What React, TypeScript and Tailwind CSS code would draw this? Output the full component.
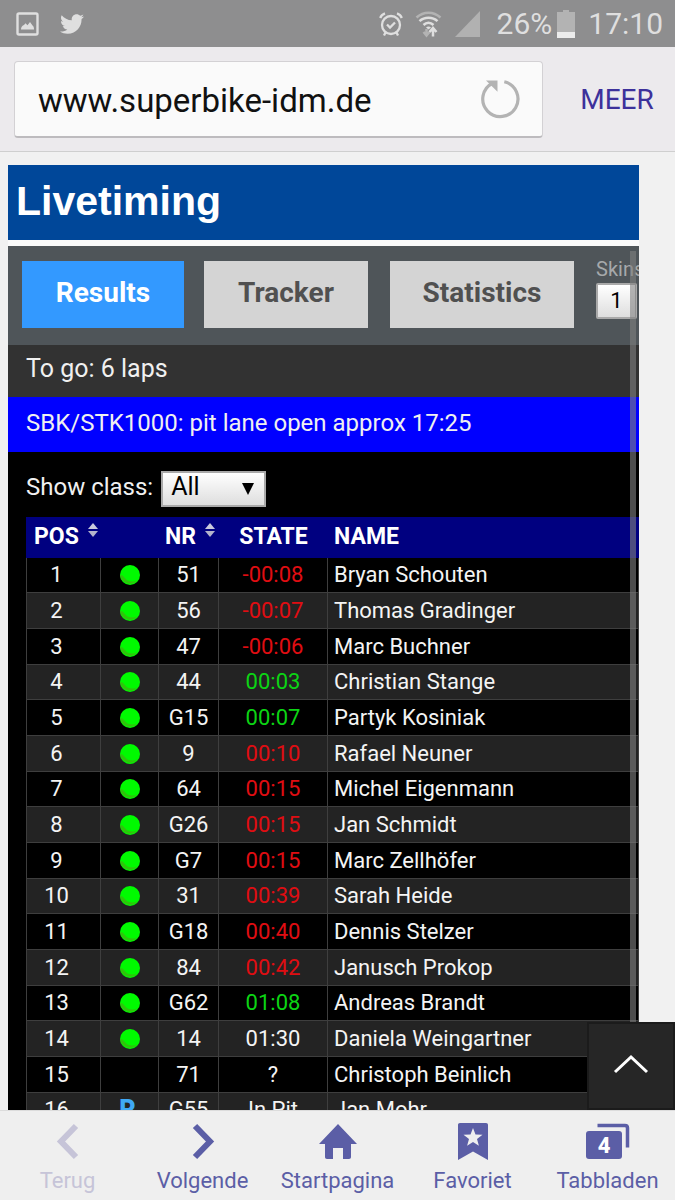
import React from 'react';
import { FaTwitter } from 'react-icons/fa';

interface Rider {
  pos: number;
  status: 'track' | 'pit' | 'none';
  nr: string;
  state: string;
  color: string;
  name: string;
}

const RED = 'text-[#e00d12]';
const GREEN = 'text-[#0cd414]';
const WHITE = 'text-[#f4f4f4]';

const riders: Rider[] = [
  { pos: 1, status: 'track', nr: '51', state: '-00:08', color: RED, name: 'Bryan Schouten' },
  { pos: 2, status: 'track', nr: '56', state: '-00:07', color: RED, name: 'Thomas Gradinger' },
  { pos: 3, status: 'track', nr: '47', state: '-00:06', color: RED, name: 'Marc Buchner' },
  { pos: 4, status: 'track', nr: '44', state: '00:03', color: GREEN, name: 'Christian Stange' },
  { pos: 5, status: 'track', nr: 'G15', state: '00:07', color: GREEN, name: 'Partyk Kosiniak' },
  { pos: 6, status: 'track', nr: '9', state: '00:10', color: RED, name: 'Rafael Neuner' },
  { pos: 7, status: 'track', nr: '64', state: '00:15', color: RED, name: 'Michel Eigenmann' },
  { pos: 8, status: 'track', nr: 'G26', state: '00:15', color: RED, name: 'Jan Schmidt' },
  { pos: 9, status: 'track', nr: 'G7', state: '00:15', color: RED, name: 'Marc Zellhöfer' },
  { pos: 10, status: 'track', nr: '31', state: '00:39', color: RED, name: 'Sarah Heide' },
  { pos: 11, status: 'track', nr: 'G18', state: '00:40', color: RED, name: 'Dennis Stelzer' },
  { pos: 12, status: 'track', nr: '84', state: '00:42', color: RED, name: 'Janusch Prokop' },
  { pos: 13, status: 'track', nr: 'G62', state: '01:08', color: GREEN, name: 'Andreas Brandt' },
  { pos: 14, status: 'track', nr: '14', state: '01:30', color: WHITE, name: 'Daniela Weingartner' },
  { pos: 15, status: 'none', nr: '71', state: '?', color: WHITE, name: 'Christoph Beinlich' },
  { pos: 16, status: 'pit', nr: 'G55', state: 'In Pit', color: WHITE, name: 'Jan Mohr' },
];

const StatusBar: React.FC = () => (
  <div className="flex h-[47px] shrink-0 items-center bg-[#8e8e8f] pr-3 pl-4 text-[#dfdfdf]">
    {/* Picture notification */}
    <svg className="h-6 w-6" viewBox="0 0 24 24" fill="none">
      <rect x="1.5" y="1.5" width="20" height="21" rx="1.5" stroke="currentColor" strokeWidth="2.4" />
      <path d="M5 17.5c0-2.500 1.500-4 3-4.500l1.500-1.800 2 2 2.500-3.200 2.500 3.500c1 .5 1.500 2 1.500 4z" fill="currentColor" />
    </svg>
    <FaTwitter className="ml-5 h-6 w-6" />

    <div className="ml-auto flex items-center">
      {/* Alarm */}
      <svg className="h-6 w-6" viewBox="0 0 24 24" fill="none" stroke="currentColor" strokeWidth="2.300">
        <circle cx="12" cy="13" r="9" />
        <path d="M8 12.500l3 3 5-5" />
        <path d="M1.200 6c.8-2.200 2.400-3.800 4.800-4.700M22.800 6c-.8-2.200-2.400-3.800-4.800-4.700M6.500 20.500L5 23.500M17.500 20.500l1.500 3" />
      </svg>
      {/* Wifi */}
      <svg className="ml-3 h-7 w-7" viewBox="0 0 28 28" fill="none" stroke="currentColor" strokeWidth="2.500">
        <path d="M1.500 7.500c7-6.500 17-6.500 24 0" opacity="0.45" />
        <path d="M4.500 11.200c5-4.600 13-4.600 18 0M8.500 15c3-2.900 7-2.900 10 0" />
        <path d="M11 17.500c1.500-1.500 3.500-1.500 5 0l-2.500 2z" fill="currentColor" stroke="none" />
        <path d="M11.500 19v6M8.500 22l3 3.500 3-3.500" opacity="0.45" />
        <path d="M18 26.500v-7M14.500 22l3.500-4 3.500 4" />
      </svg>
      {/* Signal */}
      <svg className="ml-3 h-[26px] w-[26px]" viewBox="0 0 26 26">
        <path d="M25 0v26H0z" fill="#b1b1b1" />
      </svg>
      <span className="ml-4 text-[30px] leading-9">26%</span>
      {/* Battery */}
      <svg className="ml-1 h-7 w-5" viewBox="0 0 20 28">
        <path d="M7 0h6v2h6v26H1V2h6z" fill="#b3b3b3" />
        <path d="M1 22h18v6H1z" fill="#ececec" />
      </svg>
      <span className="ml-3 text-[30px] leading-9">17:10</span>
    </div>
  </div>
);

const AddressBar: React.FC = () => (
  <div className="flex h-[105px] shrink-0 items-center border-b border-[#cfcfcf] bg-[#eceaed] pl-[14px]">
    <div className="flex h-[77px] min-w-0 flex-1 items-center rounded border border-b-2 border-[#d3d1d4] border-b-[#bdbbbe] bg-[#fafafa] pr-5 pl-[23px]">
      <input
        type="text"
        aria-label="URL"
        defaultValue="www.superbike-idm.de"
        className="min-w-0 flex-1 bg-transparent pt-1 text-[33px] leading-10 text-[#111] outline-none"
      />
      <button type="button" aria-label="Reload" className="shrink-0">
        <svg className="h-11 w-11" viewBox="0 0 44 44" fill="none">
          <path d="M26.300 4.800A17.600 17.600 0 1 1 14.500 6.200" stroke="#b3b3b3" strokeWidth="3.200" />
          <path d="M8 3.500h11.500v11.300z" fill="#b3b3b3" />
        </svg>
      </button>
    </div>
    <button type="button" className="w-[132px] shrink-0 pt-0.5 pl-4 text-center text-[28px] leading-9 text-[#3d319b]">
      MEER
    </button>
  </div>
);

const SortIcon: React.FC = () => (
  <svg className="h-[14px] w-[10px]" viewBox="0 0 10 14">
    <path d="M5 0l5 6H0z" fill="#c9c9dd" />
    <path d="M5 14l5-6H0z" fill="#b4b4cc" />
  </svg>
);

const TrackDot: React.FC = () => (
  <svg className="mx-auto h-5 w-5" viewBox="0 0 20 20" role="img" aria-label="On track">
    <circle cx="10" cy="10" r="10" fill="#00fa00" />
    <path d="M0 10c4-.5 5 5 9 6 3 .8 6 .5 8.500-.8A10 10 0 0 1 0 10z" fill="#2fc40c" />
  </svg>
);

const Results: React.FC = () => (
  <table className="w-full table-fixed border-separate border-spacing-0 text-[22px] leading-6 text-[#f4f4f4]">
    <colgroup>
      <col className="w-[75px]" />
      <col className="w-[58px]" />
      <col className="w-[60px]" />
      <col className="w-[109px]" />
      <col />
    </colgroup>
    <thead>
      <tr className="h-[41px] bg-[#000080] text-left text-[23px] leading-7 font-bold text-white [&>th]:p-0 [&>th]:pb-0.5">
        <th>
          <button type="button" className="ml-2 flex gap-[9px]">
            POS <SortIcon />
          </button>
        </th>
        <th aria-label="Status" />
        <th>
          <button type="button" className="ml-[6px] flex gap-[9px]">
            NR <SortIcon />
          </button>
        </th>
        <th className="text-center">STATE</th>
        <th>
          <span className="ml-[6px]">NAME</span>
        </th>
      </tr>
    </thead>
    <tbody>
      {riders.map((r) => (
        <tr
          key={r.pos}
          className="h-9 odd:bg-black even:bg-[#232323] nth-[3n+1]:h-[35px] [&>td]:border-r [&>td]:border-b [&>td]:border-[#3e3e3e] [&>td]:p-0"
        >
          <td className="border-l text-center">
            <span className="mr-[14px]">{r.pos}</span>
          </td>
          <td className="text-center">
            {r.status === 'track' && <TrackDot />}
            {r.status === 'pit' && <span className="mr-1 text-[25px] leading-6 font-black text-[#3fa9f5]">P</span>}
          </td>
          <td className="text-center">{r.nr}</td>
          <td className={`text-center ${r.color}`}>{r.state}</td>
          <td className="whitespace-nowrap">
            <span className="ml-[6px]">{r.name}</span>
          </td>
        </tr>
      ))}
    </tbody>
  </table>
);

const BottomNav: React.FC = () => (
  <nav className="grid h-[90px] shrink-0 grid-cols-5 border-t border-[#dcdcdc] bg-[#efefef] text-[22px] leading-7 text-[#5b5ea6]">
    <button type="button" disabled className="flex flex-col items-center gap-1 pt-3 text-[#c6c4d8]">
      <svg className="h-10 w-10" viewBox="0 0 40 40" fill="none" stroke="currentColor" strokeWidth="6">
        <path d="M28 3L13 18.500 28 34" />
      </svg>
      Terug
    </button>
    <button type="button" className="flex flex-col items-center gap-1 pt-3">
      <svg className="h-10 w-10" viewBox="0 0 40 40" fill="none" stroke="currentColor" strokeWidth="6">
        <path d="M12 3l15 15.500L12 34" />
      </svg>
      Volgende
    </button>
    <button type="button" className="flex flex-col items-center gap-1 pt-3">
      <svg className="h-10 w-10" viewBox="0 0 40 40" fill="currentColor">
        <path d="M20 1L1 21h6v13c0 1 .7 2 2 2h6V25h10v11h6c1.300 0 2-1 2-2V21h6z" />
      </svg>
      Startpagina
    </button>
    <button type="button" className="flex flex-col items-center gap-1 pt-3">
      <svg className="h-10 w-10" viewBox="0 0 40 40">
        <path d="M7 0h26c1.300 0 2 .7 2 2v35l-15-8.500L5 37V2c0-1.300.7-2 2-2z" fill="currentColor" />
        <path d="M20 5l2.500 6.500 7 .3-5.500 4.300 1.900 6.700-5.900-3.800-5.900 3.800 1.900-6.700-5.500-4.300 7-.3z" fill="#efefef" />
      </svg>
      Favoriet
    </button>
    <button type="button" className="flex flex-col items-center gap-1 pt-3">
      <svg className="h-10 w-11" viewBox="0 0 44 40">
        <path d="M11.500 2.500H39c1.500 0 2.500 1 2.500 2.500v19.500" fill="none" stroke="currentColor" strokeWidth="3.500" />
        <rect x="0" y="8" width="36" height="28" rx="3" fill="currentColor" />
        <text x="18" y="30" textAnchor="middle" fontSize="22" fontWeight="800" fill="#fff">4</text>
      </svg>
      Tabbladen
    </button>
  </nav>
);

const App: React.FC = () => {
  return (
    <div className="flex h-screen flex-col overflow-hidden bg-[#f1f1f1] font-['Roboto',sans-serif]">
      <StatusBar />
      <AddressBar />

      <main className="relative min-h-0 flex-1 overflow-hidden pt-[13px] pr-9 pl-2">
        <h1 className="h-[75px] bg-[#004799] pl-2 font-['Liberation_Sans',sans-serif] text-[41px] leading-[73px] font-bold text-white">
          Livetiming
        </h1>
        <div className="h-[6px] bg-[#fafafa]" />

        <div className="relative overflow-hidden bg-black">
          {/* Tabs and skin picker */}
          <div className="flex h-[99px] items-start bg-[#4f5559] pt-[15px] pl-[14px] text-[28px] font-bold text-[#505050]">
            <button type="button" className="h-[67px] w-[162px] shrink-0 bg-[#3399ff] pb-1 text-white">
              Results
            </button>
            <button type="button" className="ml-5 h-[67px] w-[164px] shrink-0 bg-[#d4d4d4] pb-1">
              Tracker
            </button>
            <button type="button" className="ml-[22px] h-[67px] w-[184px] shrink-0 bg-[#d4d4d4] pb-1">
              Statistics
            </button>
            <div className="ml-[22px] w-[52px] shrink-0 text-xl leading-4 font-normal text-[#a6a9ab]">
              <label htmlFor="skin" className="block">Skins</label>
              <button
                id="skin"
                type="button"
                className="mt-[6px] h-9 w-[41px] rounded-xs border-2 border-[#a9a9a9] bg-linear-to-b from-white to-[#dedede] text-[22px] leading-6 text-black"
              >
                1
              </button>
            </div>
          </div>

          <p className="h-[52px] bg-[#323232] pl-[18px] text-[25px] leading-[48px] text-[#f0f0f0]">To go: 6 laps</p>
          <p className="h-[55px] bg-[#0000ff] pl-[18px] text-2xl leading-[52px] whitespace-nowrap text-[#f0f0f0]">
            SBK/STK1000: pit lane open approx 17:25
          </p>

          <div className="pl-[18px]">
            <div className="flex h-[65px] items-center pt-2 text-2xl text-[#f0f0f0]">
              <label htmlFor="show-class" className="pb-1">Show class:</label>
              <div className="relative ml-2">
                <select
                  id="show-class"
                  className="block h-9 w-[105px] appearance-none border-2 border-[#a9a9a9] bg-linear-to-b from-white to-[#dedede] pb-1 pl-2 text-[25px] leading-7 text-black"
                >
                  <option>All</option>
                </select>
                <svg className="pointer-events-none absolute top-3 right-3 h-3 w-3" viewBox="0 0 12 12">
                  <path d="M0 0h12L6 12z" />
                </svg>
              </div>
            </div>
            <Results />
          </div>

          {/* Scroll indicator */}
          <div className="absolute top-[5px] right-[3px] bottom-0 w-[6px] bg-[#808080]/60" />
        </div>

        <button
          type="button"
          aria-label="Back to top"
          className="absolute right-0 bottom-0 flex h-[88px] w-[88px] items-center justify-center border-2 border-[#1b1b1b] bg-[#262626] pb-1"
        >
          <svg className="h-5 w-9" viewBox="0 0 36 20" fill="none" stroke="#fff" strokeWidth="3">
            <path d="M2 18L18 3l16 15" />
          </svg>
        </button>
      </main>

      <BottomNav />
    </div>
  );
};

export default App;
